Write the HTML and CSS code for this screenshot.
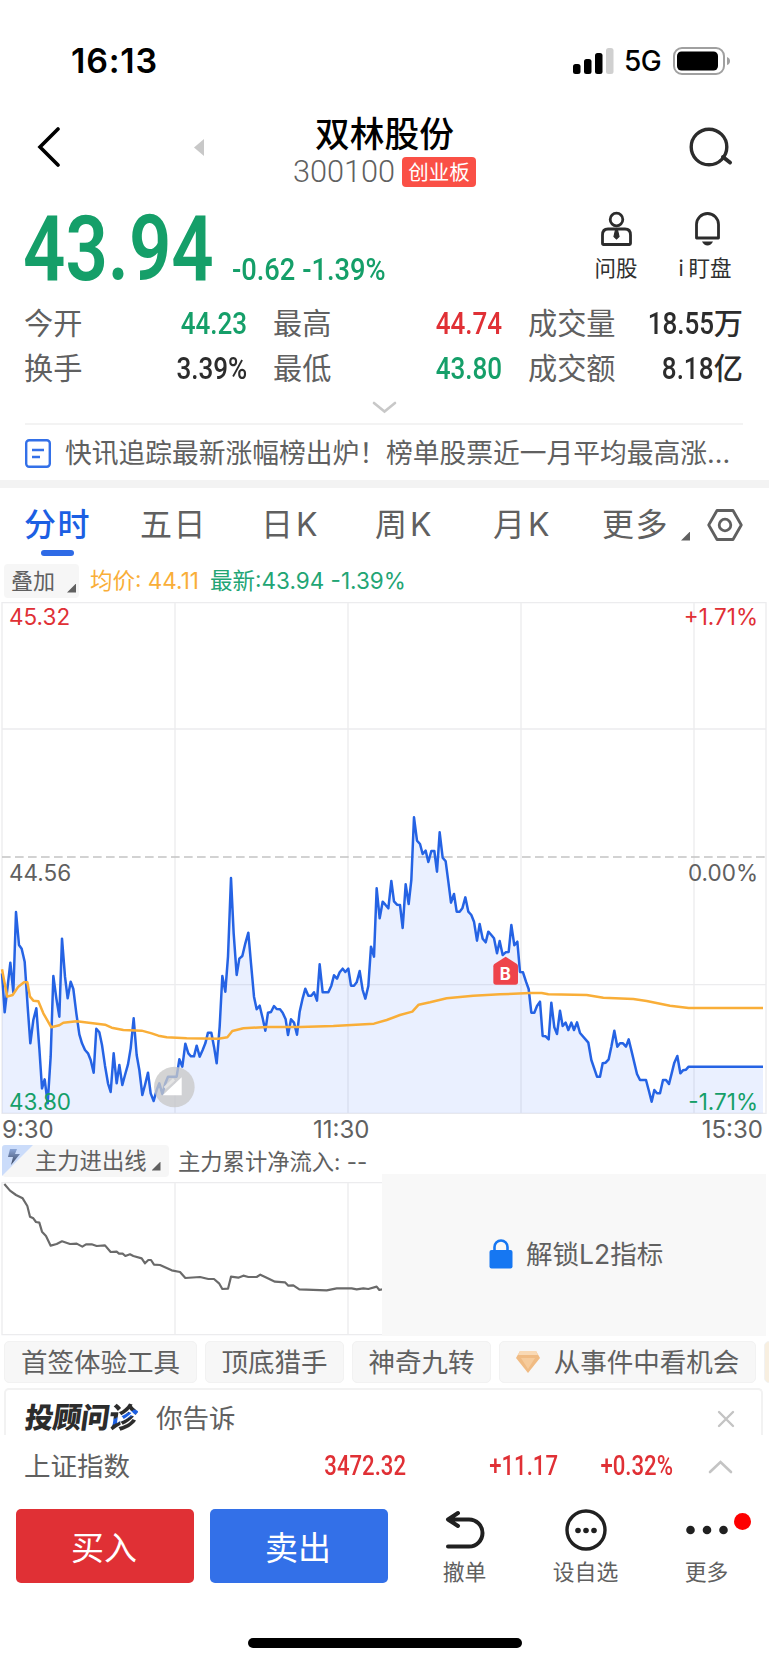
FILE: index.html
```html
<!DOCTYPE html>
<html lang="zh-CN">
<head>
    <meta charset="UTF-8">
    <meta name="viewport" content="width=device-width, initial-scale=1.0">
    <title>双林股份 300100</title>
    <link rel="stylesheet" href="styles.css">
</head>
<body>

    <!-- Status bar -->
    <div class="status-bar">
        <span class="time">16:13</span>
        <svg class="signal" width="41" height="26" viewBox="0 0 41 26">
            <rect x="0" y="16" width="7.5" height="10" rx="2.5"/>
            <rect x="11" y="11" width="7.5" height="15" rx="2.5"/>
            <rect x="22" y="5" width="7.5" height="21" rx="2.5"/>
            <rect x="33" y="0" width="7.5" height="26" rx="2.5" fill="#d0d0d0"/>
        </svg>
        <span class="network">5G</span>
        <svg class="battery" width="57" height="28" viewBox="0 0 57 28">
            <rect x="1" y="1" width="50" height="26" rx="8" fill="none" stroke="#a0a0a0" stroke-width="2"/>
            <rect x="4" y="4.5" width="41" height="19" rx="4.5"/>
            <path d="M54 10q3 1 3 4t-3 4z" fill="#a0a0a0"/>
        </svg>
    </div>

    <!-- Title bar -->
    <div class="title-bar">
        <svg class="back" width="24" height="40" viewBox="0 0 24 40">
            <path d="M21 2L3 20l18 18" fill="none" stroke="#000" stroke-width="3.6" stroke-linecap="round"/>
        </svg>
        <svg class="prev" width="10" height="17" viewBox="0 0 10 17"><path d="M10 0v17L0 8.5z" fill="#c8c8c8"/></svg>
        <div class="title">
            <h1>双林股份</h1>
            <div class="code">300100<span class="board">创业板</span></div>
        </div>
        <svg class="search" width="44" height="40" viewBox="0 0 44 40">
            <circle cx="20" cy="20" r="17.8" fill="none" stroke="#2c2c2c" stroke-width="3.4"/>
            <path d="M34 30l7 5.500" stroke="#2c2c2c" stroke-width="4" stroke-linecap="round"/>
        </svg>
    </div>

    <!-- Quote -->
    <div class="quote">
        <div class="price din">43.94</div>
        <div class="change din">-0.62 -1.39%</div>
        <div class="tool ask">
            <svg width="33" height="36" viewBox="0 0 33 36" fill="none" stroke="#2c2c2c" stroke-width="2.800">
                <circle cx="16.500" cy="8.500" r="6.300"/>
                <path d="M8 18h17q5.500 0 5.500 6v8.500q0 1-1 1H3.500q-1 0-1-1V24q0-6 5.500-6z"/>
                <path d="M15.500 19h2l1.500 6.500-2.500 2.500-2.500-2.500z" fill="#2c2c2c" stroke-width="1.200"/>
            </svg>
            <span>问股</span>
        </div>
        <div class="tool watch">
            <svg width="27" height="36" viewBox="0 0 27 36">
                <path d="M2.500 27V13.500a11 11 0 0 1 22 0V27z" fill="none" stroke="#2c2c2c" stroke-width="2.800" stroke-linejoin="round"/>
                <path d="M8 30.500h11q-2 4-5.500 4T8 30.500z" fill="#2c2c2c"/>
            </svg>
            <span><i>i</i>盯盘</span>
        </div>
    </div>

    <div class="stats">
        <span class="label">今开</span><span class="value green"><b class="din">44.23</b></span>
        <span class="label">最高</span><span class="value red"><b class="din">44.74</b></span>
        <span class="label">成交量</span><span class="value last-col"><b class="din">18.55</b>万</span>
        <span class="label">换手</span><span class="value"><b class="din">3.39%</b></span>
        <span class="label">最低</span><span class="value green"><b class="din">43.80</b></span>
        <span class="label">成交额</span><span class="value last-col"><b class="din">8.18</b>亿</span>
    </div>
    <div class="expand">
        <svg width="25" height="13" viewBox="0 0 25 13"><path d="M2 2l10.500 8.500L23 2" fill="none" stroke="#c8c8c8" stroke-width="2.600" stroke-linecap="round"/></svg>
    </div>

    <!-- News line -->
    <div class="news">
        <svg width="26" height="29" viewBox="0 0 26 29" fill="none" stroke="#3370e8" stroke-width="2.400">
            <rect x="1.200" y="1.200" width="23.600" height="26.600" rx="3"/>
            <path d="M7 11h12M7 18h8"/>
        </svg>
        <span>快讯追踪最新涨幅榜出炉！榜单股票近一月平均最高涨...</span>
    </div>

    <!-- Chart tabs -->
    <div class="tabs">
        <span class="tab active">分时</span>
        <span class="tab">五日</span>
        <span class="tab k">日K</span>
        <span class="tab k">周K</span>
        <span class="tab k">月K</span>
        <span class="tab">更多</span>
        <i class="corner"></i>
        <svg width="36" height="32" viewBox="0 0 36 32" fill="none" stroke="#606060" stroke-width="2.800">
            <path d="M10 1.500h16L34.300 16 26 30.500H10L1.700 16z" stroke-linejoin="round"/>
            <circle cx="18" cy="16" r="5.800"/>
        </svg>
    </div>

    <div class="legend">
        <span class="chip-overlay">叠加<i class="corner"></i></span>
        <span class="avg">均价: 44.11</span>
        <span class="last">最新:43.94 -1.39%</span>
    </div>

    <!-- Price chart, three units per pixel -->
    <div class="chart">
        <svg width="769" height="513" viewBox="0 0 2307 1539" fill="none">
            <g stroke="#ececee" stroke-width="4">
                <path d="M6 2H2298V1534H6zM525 2V1534M1044 2V1534M1563 2V1534M2082 2V1534M6 381H2298M6 1148H2298"/>
            </g>
            <path d="M6 765H2298" stroke="#c4c4c4" stroke-width="5" stroke-dasharray="26 13"/>
            <g transform="translate(0 594)" stroke-linejoin="round">
                <path id="area" fill="#2f6bff" fill-opacity=".1"/>
                <polyline id="price" stroke="#2563e4" stroke-width="7.500" points="6,520 14,637 31,488 40,577 48,336 57,435 65,446 74,485 83,620 91,730 100,660 109,625 118,745 126,865 134,838 143,910 152,770 160,528 169,595 178,650 186,416 195,530 203,595 212,545 220,567 229,640 238,703 246,730 255,750 264,760 272,780 281,818 289,686 298,697 306,735 315,797 324,850 332,876 341,760 350,850 358,795 367,855 375,825 384,793 392,745 401,655 410,765 418,810 427,885 435,855 444,818 452,880 461,903 470,870 478,850 487,882 496,850 504,830 530,830 538,778 547,800 556,731 565,760 573,769 582,769 590,737 599,770 608,750 616,730 624,698 634,698 642,740 650,790 659,680 667,528 676,575 684,470 693,234 701,400 710,525 718,476 727,468 736,430 745,398 753,490 762,590 770,628 779,617 788,655 796,692 804,638 813,636 822,618 830,627 840,628 848,638 857,658 864,705 873,658 882,668 891,704 899,635 908,595 916,566 925,587 934,587 942,577 951,602 959,493 968,577 985,577 994,557 1002,526 1011,536 1019,517 1028,506 1036,516 1045,506 1053,557 1062,557 1070,547 1079,513 1088,570 1096,596 1105,558 1113,440 1122,470 1130,265 1139,355 1148,305 1156,314 1165,325 1174,243 1182,304 1191,314 1200,315 1208,384 1217,253 1226,312 1234,240 1242,52 1251,122 1260,132 1268,162 1277,152 1285,186 1294,153 1303,153 1311,215 1319,97 1328,173 1337,184 1345,245 1353,308 1362,282 1370,335 1379,335 1387,325 1396,292 1405,335 1414,345 1422,365 1431,422 1439,372 1448,416 1457,427 1465,395 1474,405 1482,415 1491,460 1499,423 1508,465 1517,457 1526,456 1534,375 1543,436 1552,425 1560,516 1569,517 1578,545 1586,567 1594,638 1603,638 1611,618 1620,605 1628,708 1637,709 1646,718 1654,608 1663,682 1671,702 1680,632 1688,678 1697,668 1705,690 1714,668 1722,690 1731,667 1740,699 1765,728 1774,780 1791,830 1800,830 1808,790 1817,788 1826,778 1834,740 1843,692 1852,740 1860,730 1869,730 1878,740 1886,718 1895,755 1911,822 1920,840 1938,840 1946,870 1955,905 1963,870 1971,880 1980,880 1989,840 1998,840 2007,852 2015,820 2023,788 2032,768 2041,820 2049,811 2058,809 2066,800 2289,800"/>
                <polyline stroke="#f9ae38" stroke-width="7.500" points="6,508 14,550 22,590 38,585 55,560 72,547 82,547 90,590 100,602 115,604 130,640 154,682 178,676 190,668 230,664 315,674 335,683 370,690 425,692 455,700 475,707 500,712 560,715 655,716 682,712 697,693 730,685 800,681 900,681 1000,678 1122,671 1160,660 1200,645 1237,635 1256,614 1290,607 1340,595 1420,587 1500,583 1590,579 1625,579 1645,583 1760,585 1810,593 1900,597 1940,603 2010,617 2066,624 2289,624"/>
                <!-- buy marker -->
                <path d="M1517 470l34 22q3 3 3 7v47q0 8-8 8h-58q-8 0-8-8v-47q0-4 3-7z" fill="#ee444b"/>
                <text class="marker" x="1516" y="539" text-anchor="middle">B</text>
                <!-- fullscreen handle -->
                <circle cx="523" cy="861" r="61" fill="#c8c8c8" fill-opacity=".78"/>
                <path d="M545 832v54h-57z" fill="#fff"/>
                <path d="M494 864l28-26" stroke="#e4e4e4" stroke-width="9"/>
            </g>
        </svg>
        <span class="axis top-left red">45.32</span>
        <span class="axis top-right red">+1.71%</span>
        <span class="axis mid-left">44.56</span>
        <span class="axis mid-right">0.00%</span>
        <span class="axis bottom-left green">43.80</span>
        <span class="axis bottom-right green">-1.71%</span>
    </div>
    <div class="times"><span>9:30</span><span>11:30</span><span>15:30</span></div>

    <!-- Capital flow -->
    <div class="flow-head">
        <span class="flow-button">
            <svg width="32" height="32" viewBox="0 0 32 32">
                <defs><linearGradient id="bolt" x2="0" y2="1"><stop offset="0" stop-color="#8ba6d8"/><stop offset="1" stop-color="#39445c"/></linearGradient></defs>
                <path d="M3 0h28L0 31V3q0-3 3-3z" fill="#cbdcfa"/>
                <path d="M8 4h7l-2 5h5L9 20l2-8H6z" fill="url(#bolt)"/>
            </svg>
            主力进出线<i class="corner"></i>
        </span>
        <span class="flow-text">主力累计净流入: --</span>
    </div>
    <div class="flow">
        <svg class="flow-chart" width="382" height="154" viewBox="0 0 1146 462" fill="none">
            <path d="M1146 2H6V458H1146M525 2V458M1044 2V458" stroke="#ececee" stroke-width="4"/>
            <polyline transform="translate(0 -186)" stroke="#6a6a6a" stroke-width="6.500" stroke-linejoin="round" points="13,192 30,212 48,225 68,235 82,258 90,290 100,295 108,306 118,308 126,335 138,348 152,377 170,372 186,364 210,372 230,371 247,380 258,373 275,373 290,378 315,376 332,396 350,395 357,401 368,401 376,408 390,403 400,408 425,415 435,430 445,420 453,420 462,434 480,435 515,451 540,456 556,474 600,471 625,477 642,477 658,491 667,507 684,506 693,470 715,473 730,467 745,471 770,471 781,464 800,473 825,485 855,487 865,497 880,496 898,508 980,511 1010,505 1055,505 1070,508 1090,505 1105,507 1130,500 1138,510 1146,508"/>
        </svg>
        <div class="locked">
            <svg width="24" height="30" viewBox="0 0 24 30">
                <path d="M5.500 13V8a6.500 6.500 0 0 1 13 0v5" fill="none" stroke="#1677f2" stroke-width="2.600"/>
                <rect x="0.500" y="11" width="23" height="18.500" rx="2" fill="#1677f2"/>
            </svg>
            <span>解锁L2指标</span>
        </div>
    </div>

    <div class="chips">
        <span class="chip">首签体验工具</span>
        <span class="chip">顶底猎手</span>
        <span class="chip">神奇九转</span>
        <span class="chip gem">
            <svg width="24" height="22" viewBox="0 0 24 22">
                <path d="M4 0h16l4 7-12 15L0 7z" fill="#f0bb83"/>
                <path d="M4 0h16l2 4H2z" fill="#f9d9b4"/>
                <path d="M5 7h14l-7 11z" fill="#f6cb9b"/>
            </svg>从事件中看机会
        </span>
        <span class="chip next"></span>
    </div>

    <div class="advisor">
        <span class="advisor-logo">投顾问<span>诊</span></span>
        <span class="advisor-text">你告诉</span>
        <svg width="18" height="18" viewBox="0 0 18 18"><path d="M2 2l14 14M16 2L2 16" stroke="#c4c4c4" stroke-width="2.400" stroke-linecap="round"/></svg>
    </div>

    <!-- Index line -->
    <div class="index">
        <span class="index-name">上证指数</span>
        <b class="din">3472.32</b>
        <b class="din">+11.17</b>
        <b class="din">+0.32%</b>
        <svg width="25" height="15" viewBox="0 0 25 15"><path d="M2 13L12.500 3 23 13" fill="none" stroke="#c4c4c4" stroke-width="2.600" stroke-linecap="round"/></svg>
    </div>

    <!-- Bottom actions -->
    <div class="actions">
        <button class="buy">买入</button>
        <button class="sell">卖出</button>
        <div class="action">
            <svg width="42" height="40" viewBox="0 0 42 40" fill="none" stroke="#202020" stroke-width="4" stroke-linecap="round" stroke-linejoin="round">
                <path d="M4 36.500h21a13.500 13.500 0 0 0 0-27H4M14 3L4 9.500l10 6.500"/>
            </svg>
            <span>撤单</span>
        </div>
        <div class="action">
            <svg width="42" height="42" viewBox="0 0 42 42" fill="#202020">
                <circle cx="21" cy="21" r="19" fill="none" stroke="#202020" stroke-width="3.400"/>
                <circle cx="13" cy="21.500" r="2.800"/><circle cx="21" cy="21.500" r="2.800"/><circle cx="29" cy="21.500" r="2.800"/>
            </svg>
            <span>设自选</span>
        </div>
        <div class="action more">
            <svg width="42" height="42" viewBox="0 0 42 42" fill="#202020">
                <circle cx="4.500" cy="21" r="4.300"/><circle cx="21" cy="21" r="4.300"/><circle cx="37.500" cy="21" r="4.300"/>
            </svg>
            <span>更多</span>
            <i class="badge"></i>
        </div>
    </div>
    <div class="home-bar"></div>

    <script>
        // Close the price line down to the bottom of the plot
        var points = document.getElementById('price').getAttribute('points');
        document.getElementById('area').setAttribute('d', 'M6 940L' + points + ' 2289 940z');
    </script>
</body>
</html>
```
FILE: styles.css
```css
* {
    box-sizing: border-box;
}

body {
    margin: 0;
    width: 769px;
    height: 1665px;
    overflow: hidden;
    background: #fff;
    color: #606060;
    font-family: Inter, "Noto Sans CJK SC", sans-serif;
    line-height: 1;
}

svg {
    display: block;
    flex: none;
}

i {
    font-style: normal;
}

.red { color: #e03035; }
.green { color: #159f69; }

/* Narrow numerals */
.din {
    display: inline-block;
    font-family: Roboto, "Noto Sans CJK SC", sans-serif;
    font-weight: 600;
    white-space: pre;
    transform: scaleX(0.84);
    transform-origin: right center;
}

/* Small triangle in the lower right of a button */
.corner {
    width: 9px;
    height: 9px;
    background: #606060;
    clip-path: polygon(100% 0, 100% 100%, 0 100%);
}

/* Status bar */
.status-bar {
    display: flex;
    align-items: center;
    height: 100px;
    padding: 22px 0 0 71px;
    color: #000;
}

.time {
    width: 502px;
    font-size: 34px;
    font-weight: 600;
    letter-spacing: 0.8px;
}

.network {
    width: 49px;
    padding-left: 10px;
    font-size: 28px;
    font-weight: 500;
    letter-spacing: -0.5px;
}

.battery {
    margin-left: 10px;
}

/* Title bar */
.title-bar {
    display: flex;
    height: 100px;
    padding-left: 37px;
}

.back {
    margin-top: 27px;
}

.prev {
    margin: 39px 0 0 133px;
}

.title {
    width: 361px;
    text-align: center;
}

.title h1 {
    margin: 17px 0 0;
    color: #000;
    font-size: 34.7px;
    font-weight: 500;
    line-height: 34px;
}

.code {
    display: flex;
    justify-content: center;
    align-items: center;
    height: 30px;
    margin-top: 6px;
    font-family: Roboto, sans-serif;
    font-size: 30.7px;
    font-weight: 300;
}

.board {
    width: 74px;
    height: 30px;
    margin-left: 7px;
    border-radius: 4px;
    background: #fa5046;
    color: #fff;
    font: 400 20.5px/29px "Noto Sans CJK SC", sans-serif;
}

.search {
    margin: 27px 0 0 124px;
}

/* Quote */
.quote {
    display: flex;
    height: 100px;
    padding: 11px 0 0 23px;
}

.quote .din {
    color: #159f69;
    transform-origin: left center;
}

.quote .price {
    width: 209px;
    padding-top: 2px;
    font-size: 90px;
    line-height: 74px;
    transform: scaleX(0.825);
}

.quote .change {
    width: 362px;
    padding-top: 43px;
    font-size: 31px;
    font-weight: 500;
    transform: scaleX(0.88);
}

.tool {
    display: flex;
    flex-direction: column;
    align-items: center;
    width: 44px;
    color: #303030;
    font-size: 21.5px;
    white-space: nowrap;
}

.tool span {
    margin-top: 11px;
}

.watch {
    width: 54px;
    margin-left: 42px;
}

.watch span {
    margin-left: -4px;
}

.watch i {
    margin-right: 5px;
}

/* Stats */
.stats {
    display: grid;
    grid-template-columns: 93px 156px 93px 162px 103px 1fr;
    grid-auto-rows: 45px;
    align-items: center;
    height: 90px;
    padding: 1px 26px 0 24px;
    font-size: 29.2px;
    line-height: 45px;
}

.stats .value {
    padding-right: 26px;
    text-align: right;
    font-weight: 500;
    white-space: nowrap;
}

.stats .last-col {
    padding-right: 0;
}

.stats .value:not(.red):not(.green) {
    color: #2c2c2c;
}

.stats .din {
    font-size: 31px;
    font-weight: 500;
}

.expand {
    display: flex;
    justify-content: center;
    height: 33px;
    padding-top: 11px;
}

/* News */
.news {
    display: flex;
    align-items: center;
    gap: 14px;
    height: 57px;
    margin: 0 26px 0 25px;
    padding-top: 1px;
    border-top: 2px solid #f3f3f3;
    font-size: 26.75px;
    white-space: nowrap;
}

/* Tabs */
.tabs {
    display: flex;
    align-items: center;
    height: 82px;
    padding: 0 0 0 24px;
    border-top: 8px solid #f3f3f3;
    font-size: 32px;
    line-height: 76px;
}

.tab {
    position: relative;
    width: 118px;
    letter-spacing: 1.5px;
    white-space: nowrap;
}

.tab.k {
    letter-spacing: 3px;
}

.tab.active {
    width: 116px;
    color: #1c5fe3;
    font-weight: 500;
}

.tab.active::after {
    content: "";
    position: absolute;
    left: 17px;
    bottom: 7px;
    width: 33px;
    height: 6px;
    border-radius: 3px;
    background: #2f6be6;
}

.tab:nth-child(2) { width: 121px; }
.tab:nth-child(3) { width: 114px; }
.tab:nth-child(5) { width: 109px; }
.tab:nth-child(6) { width: 79px; }

.tabs .corner {
    margin: 22px 17px 0 0;
}

/* Legend */
.legend {
    display: flex;
    align-items: center;
    height: 40px;
    padding: 2px 0 4px 4px;
    font-size: 22.5px;
    white-space: nowrap;
}

.chip-overlay {
    display: flex;
    align-items: center;
    width: 75px;
    height: 34px;
    padding-left: 7px;
    border-radius: 4px;
    background: #f6f6f6;
    font-size: 22px;
}

.chip-overlay .corner {
    margin: 14px 0 0 12px;
}

.avg {
    width: 120px;
    margin-left: 11px;
    color: #f9ae38;
}

.last {
    color: #22a574;
}

/* Price chart */
.chart {
    position: relative;
    height: 513px;
}

.marker {
    fill: #fff;
    font-size: 50px;
    font-weight: 700;
}

.axis {
    position: absolute;
    font-size: 22.5px;
}

.top-left { left: 9px; top: 4px; }
.top-right { right: 11px; top: 4px; }
.mid-left { left: 9px; top: 260px; }
.mid-right { right: 11px; top: 260px; }
.bottom-left { left: 9px; top: 489px; }
.bottom-right { right: 11px; top: 489px; }

.times {
    display: grid;
    grid-template-columns: 311px 1fr auto;
    height: 30px;
    padding: 3px 6px 0 2px;
    font-size: 24px;
}

/* Capital flow */
.flow-head {
    display: flex;
    align-items: center;
    height: 32px;
    padding-left: 2px;
    font-size: 22.3px;
    white-space: nowrap;
}

.flow-button {
    display: flex;
    align-items: center;
    width: 167px;
    height: 32px;
    border-radius: 4px;
    background: #f6f6f6;
}

.flow-button svg {
    margin-right: 1px;
}

.flow-button .corner {
    margin: 10px 0 0 5px;
}

.flow-text {
    margin-left: 9px;
    padding-top: 2px;
}

.flow {
    display: flex;
    height: 159px;
}

.flow-chart {
    margin-top: 5px;
}

.locked {
    display: flex;
    align-items: center;
    gap: 13px;
    width: 384px;
    height: 162px;
    margin-top: -3px;
    padding: 0 0 2px 107px;
    background: #f8f8f8;
    font-size: 26.5px;
}

/* Chips */
.chips {
    display: flex;
    gap: 8px;
    height: 52px;
    padding: 5px 0 5px 4px;
    overflow: hidden;
    font-size: 26.5px;
    white-space: nowrap;
}

.chip {
    display: flex;
    flex: none;
    justify-content: center;
    align-items: center;
    width: 139px;
    height: 42px;
    border: 1px solid #f2f2f2;
    border-radius: 5px;
    background: #f7f7f7;
}

.chip:first-child {
    width: 193px;
}

.chip.gem {
    width: 257px;
    gap: 14px;
}

.chip.next {
    background: #f8efe0;
}

/* Advisor card */
.advisor {
    display: flex;
    align-items: center;
    height: 47px;
    margin: 0 6px 0 4px;
    padding: 12px 26px 0 19px;
    border: 2px solid #f2f2f2;
    border-bottom: 0;
    border-radius: 5px 5px 0 0;
    font-size: 26.5px;
}

.advisor-logo {
    width: 131px;
    color: #2c2c2c;
    font-size: 28.5px;
    font-weight: 900;
    letter-spacing: -0.5px;
    transform: skewX(-8deg);
}

.advisor-logo span {
    background: linear-gradient(155deg, #2c2c2c 44%, #1c5fe3 44%, #1c5fe3 56%, #2c2c2c 56%);
    background-clip: text;
    -webkit-background-clip: text;
    color: transparent;
}

.advisor svg {
    margin-left: auto;
}

/* Index line */
.index {
    display: grid;
    grid-template-columns: 200px 182px 152px 115px 60px;
    align-items: center;
    height: 62px;
    padding-left: 24px;
    font-size: 26.5px;
}

.index .din {
    color: #e03035;
    font-size: 27px;
    font-weight: 500;
    text-align: right;
    transform: scaleX(0.82);
}

.index svg {
    margin-left: auto;
}

/* Bottom actions */
.actions {
    display: flex;
    height: 130px;
    padding: 12px 0 0 16px;
}

.actions button {
    width: 178px;
    height: 74px;
    margin-right: 16px;
    padding: 0 2px 0 0;
    border: none;
    border-radius: 5px;
    color: #fff;
    font: 400 33px "Noto Sans CJK SC", sans-serif;
}

.buy { background: #e03035; }
.sell { background: #3370e8; }

.action {
    position: relative;
    display: flex;
    flex-direction: column;
    align-items: center;
    width: 121px;
    font-size: 21.8px;
}

.action svg {
    height: 42px;
}

.action span {
    margin-top: 11px;
}

.badge {
    position: absolute;
    top: 4px;
    left: 88px;
    width: 17px;
    height: 17px;
    border-radius: 50%;
    background: #fd0000;
}

/* Home indicator */
.home-bar {
    width: 274px;
    height: 10px;
    margin: 11px auto 0;
    border-radius: 5px;
    background: #000;
}
```
